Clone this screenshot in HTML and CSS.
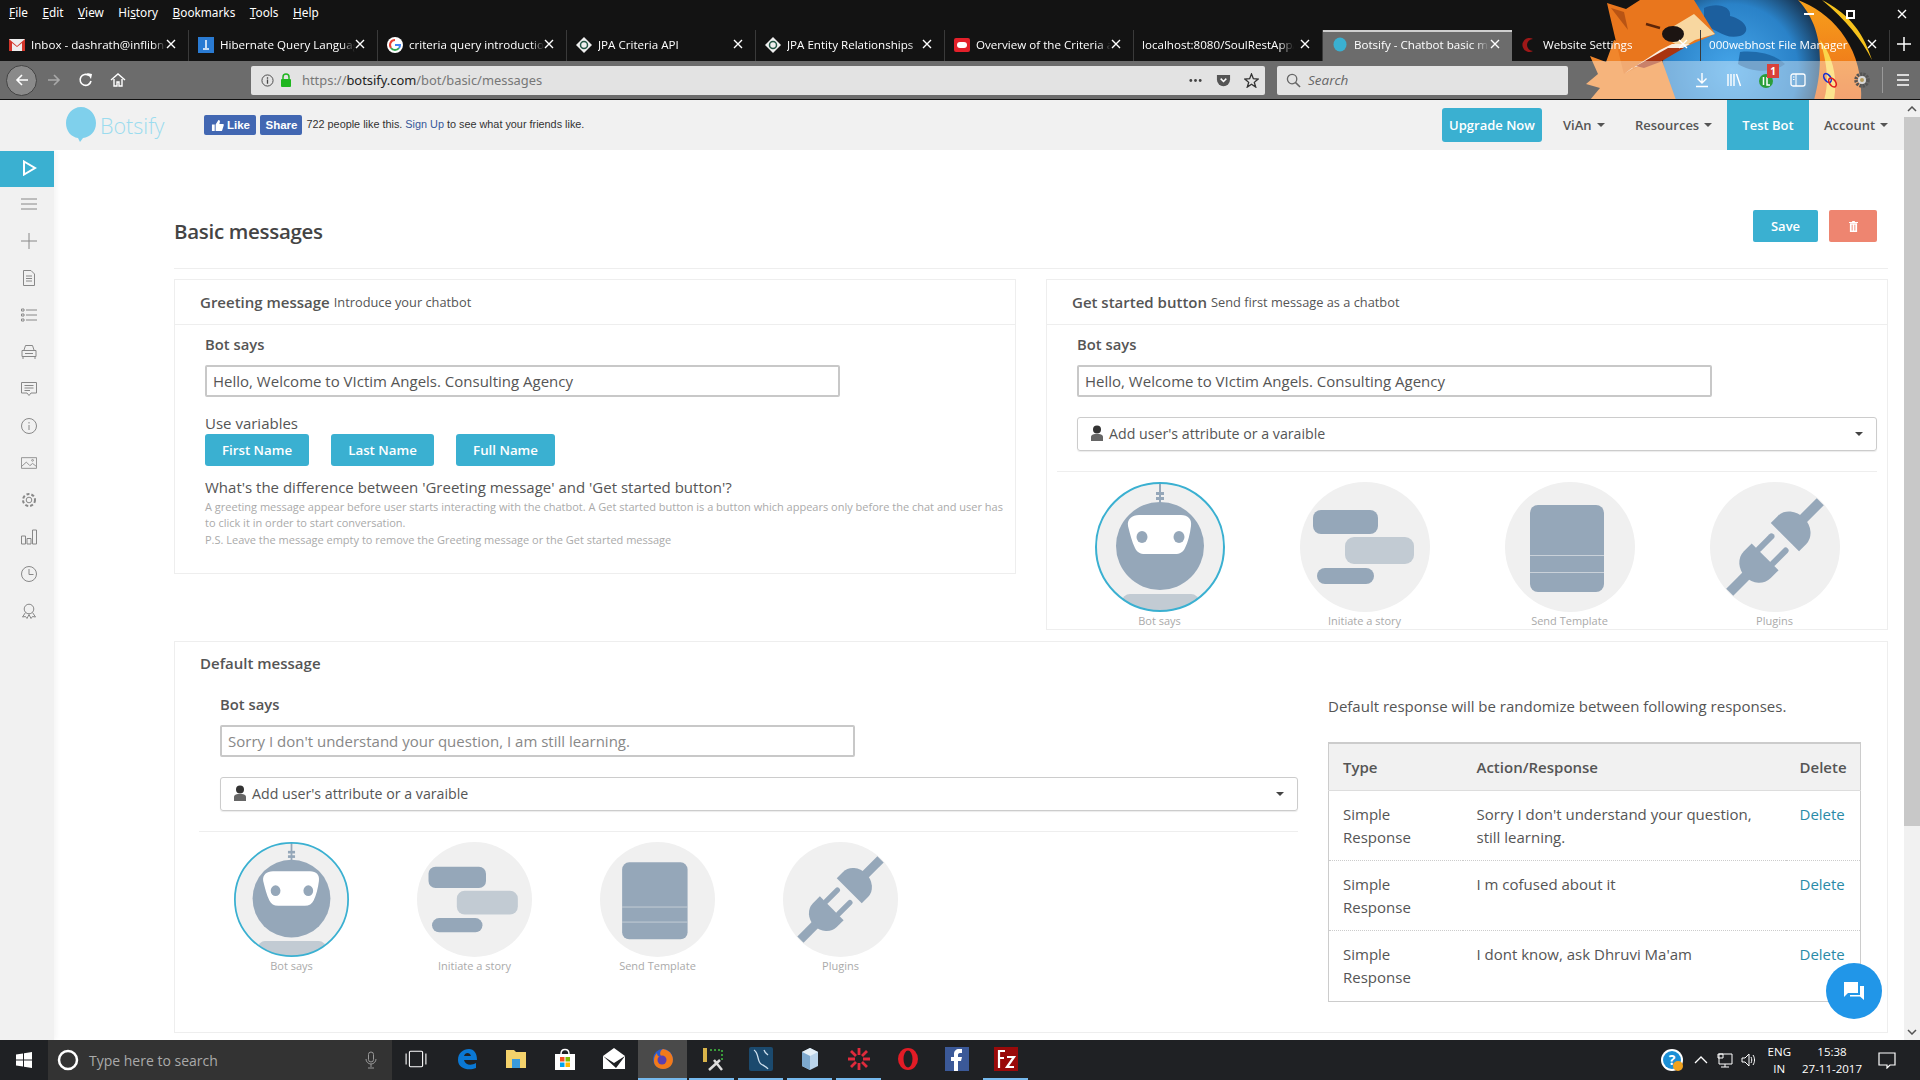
FILE: index.html
```html
<!DOCTYPE html>
<html lang="en">
<head>
<meta charset="utf-8">
<title>Botsify - Chatbot basic messages</title>
<link rel="stylesheet" href="styles.css">
</head>
<body>
<svg class="defs" width="0" height="0" aria-hidden="true">
  <defs>
    <clipPath id="circ"><circle cx="65" cy="65" r="64"/></clipPath>
    <symbol id="i-bot" viewBox="0 0 130 130">
      <circle cx="65" cy="65" r="64" fill="#f0f0f0"/>
      <g clip-path="url(#circ)">
        <rect x="27" y="112" width="77" height="20" rx="8" fill="#c2cbd3"/>
        <rect x="64" y="0" width="2" height="22" fill="#95a7b9"/>
        <rect x="61" y="10" width="8" height="3" fill="#95a7b9"/>
        <rect x="61" y="15" width="8" height="3" fill="#95a7b9"/>
        <circle cx="65" cy="64" r="44" fill="#95a7b9"/>
        <path d="M44 33H86C93 33 97 37 96 44C95 52 93 60 90 66C88 70 85 72 80 72H50C45 72 42 70 40 66C37 60 35 52 33 44C32 37 37 33 44 33Z" fill="#fff"/>
        <ellipse cx="47" cy="55" rx="5.500" ry="6" fill="#95a7b9"/>
        <ellipse cx="84" cy="55" rx="5.500" ry="6" fill="#95a7b9"/>
      </g>
      <circle cx="65" cy="65" r="64" fill="none" stroke="#3ab0d1" stroke-width="2"/>
    </symbol>
    <symbol id="i-story" viewBox="0 0 130 130">
      <circle cx="65" cy="65" r="65" fill="#f0f0f0"/>
      <rect x="13" y="28" width="65" height="24" rx="8" fill="#95a7b9"/>
      <rect x="45" y="55" width="69" height="27" rx="9" fill="#c2cbd3"/>
      <rect x="17" y="86" width="57" height="16" rx="8" fill="#95a7b9"/>
    </symbol>
    <symbol id="i-tpl" viewBox="0 0 130 130">
      <circle cx="65" cy="65" r="65" fill="#f0f0f0"/>
      <rect x="25" y="23" width="74" height="87" rx="8" fill="#95a7b9"/>
      <rect x="25" y="73" width="74" height="1" fill="#c9d1d9"/>
      <rect x="25" y="90" width="74" height="1" fill="#c9d1d9"/>
    </symbol>
    <symbol id="i-plug" viewBox="0 0 130 130">
      <circle cx="65" cy="65" r="65" fill="#f0f0f0"/>
      <g transform="rotate(45 65 65)" fill="#95a7b9">
        <rect x="60" y="1" width="10" height="30"/>
        <path d="M45 51V41A20 17 0 0 1 85 41V51Z"/>
        <rect x="52" y="57" width="6" height="24" rx="3"/>
        <rect x="72" y="57" width="6" height="24" rx="3"/>
        <path d="M46 79H84V90A19 17 0 0 1 46 90Z"/>
        <rect x="60" y="104" width="10" height="25"/>
      </g>
    </symbol>
    <symbol id="i-person" viewBox="0 0 14 16">
      <circle cx="7" cy="4.500" r="4" fill="#333"/>
      <path d="M1 16V12C1 9.500 4 9 7 9S13 9.500 13 12V16Z" fill="#666"/>
    </symbol>
    <symbol id="i-x" viewBox="0 0 10 10"><path d="M1 1L9 9M9 1L1 9" stroke="#fff" stroke-width="1.400" fill="none"/></symbol>
    <symbol id="i-jpa" viewBox="0 0 16 16"><path d="M8 0L16 8L8 16L0 8Z" fill="#eee"/><circle cx="8" cy="8" r="3.500" fill="none" stroke="#254" stroke-width="1.500"/></symbol>
  </defs>
</svg>

<header class="chrome">
  <svg class="theme" viewBox="1560 0 360 100" width="360" height="100" aria-hidden="true">
    <defs>
      <radialGradient id="globe" cx="0.42" cy="0.55" r="0.62"><stop offset="0" stop-color="#46a6ea"/><stop offset="0.65" stop-color="#2a82c8"/><stop offset="1" stop-color="#14283f"/></radialGradient>
      <linearGradient id="flame" x1="0" y1="0" x2="0" y2="1"><stop offset="0" stop-color="#f7a11b"/><stop offset="1" stop-color="#ec6a1a"/></linearGradient>
    </defs>
    <circle cx="1745" cy="62" r="82" fill="url(#globe)"/>
    <path d="M1704 8C1716 2 1732 6 1730 16C1746 20 1752 32 1740 36C1724 40 1716 28 1704 26Z" fill="#1c5f9e"/>
    <path d="M1740 52C1755 50 1775 54 1785 64C1772 74 1750 72 1738 64Z" fill="#1f6bab"/>
    <path d="M1798 0C1830 12 1864 45 1861 100H1814C1822 70 1826 30 1798 0Z" fill="url(#flame)"/>
    <path d="M1822 0C1845 12 1862 28 1872 60C1862 40 1846 20 1822 0Z" fill="#f6c21c"/>
    <path d="M1820 40C1832 55 1838 75 1834 100H1824C1830 80 1826 60 1820 40Z" fill="#fbd44a"/>
    <path d="M1590 100L1600 88L1586 84L1598 74L1590 56L1606 62L1614 40L1660 55L1676 100Z" fill="#f0862c"/>
    <path d="M1607 3L1626 9L1640 0H1694L1715 34L1692 44L1660 56L1624 74C1618 50 1612 25 1607 3Z" fill="#e9761d"/>
    <path d="M1611 8L1624 12L1628 30Z" fill="#b85414"/>
    <path d="M1674 26L1694 14L1715 34L1695 40L1682 48L1672 42Z" fill="#f8d7a0"/>
    <path d="M1624 74L1660 50L1672 44L1690 44L1660 60L1632 68Z" fill="#fbeee0"/>
    <path d="M1636 66L1668 48L1684 48L1660 62L1644 68Z" fill="#a93410"/>
    <ellipse cx="1673" cy="34" rx="11" ry="8" fill="#1c1412"/>
    <path d="M1646 24L1660 28" stroke="#5e2508" stroke-width="2.500"/>
  </svg>
  <nav class="menubar">
    <span class="menu"><u>F</u>ile</span>
    <span class="menu"><u>E</u>dit</span>
    <span class="menu"><u>V</u>iew</span>
    <span class="menu">Hi<u>s</u>tory</span>
    <span class="menu"><u>B</u>ookmarks</span>
    <span class="menu"><u>T</u>ools</span>
    <span class="menu"><u>H</u>elp</span>
    <div class="winctl">
      <span class="min"></span>
      <span class="restore"></span>
      <svg class="wclose"><use href="#i-x"/></svg>
    </div>
  </nav>
  <div class="tabs">
    <div class="tab"><svg class="fav" viewBox="0 0 16 16"><rect y="2" width="16" height="12" fill="#eee"/><path d="M0 2L8 9L16 2V14H13V6L8 10L3 6V14H0Z" fill="#d3352a"/></svg><span class="tl">Inbox - dashrath@inflibnet</span><svg class="tx"><use href="#i-x"/></svg></div>
    <div class="tab"><svg class="fav" viewBox="0 0 16 16"><rect width="16" height="16" fill="#2a7bd3"/><path d="M8 3V11M5 12H11" stroke="#fff" stroke-width="1.500"/></svg><span class="tl">Hibernate Query Language</span><svg class="tx"><use href="#i-x"/></svg></div>
    <div class="tab"><svg class="fav" viewBox="0 0 16 16"><circle cx="8" cy="8" r="8" fill="#fff"/><path d="M8 3A5 5 0 0 0 4 11" stroke="#e94235" stroke-width="2" fill="none"/><path d="M4 11A5 5 0 0 0 12 11" stroke="#34a853" stroke-width="2" fill="none"/><path d="M12 11A5 5 0 0 0 13 8H8" stroke="#4285f4" stroke-width="2" fill="none"/></svg><span class="tl">criteria query introduction</span><svg class="tx"><use href="#i-x"/></svg></div>
    <div class="tab"><svg class="fav"><use href="#i-jpa"/></svg><span class="tl">JPA Criteria API</span><svg class="tx"><use href="#i-x"/></svg></div>
    <div class="tab"><svg class="fav"><use href="#i-jpa"/></svg><span class="tl">JPA Entity Relationships</span><svg class="tx"><use href="#i-x"/></svg></div>
    <div class="tab"><svg class="fav" viewBox="0 0 16 16"><rect y="1" width="16" height="14" rx="2" fill="#e3202a"/><rect x="3" y="5" width="10" height="6" rx="3" fill="#fff"/></svg><span class="tl">Overview of the Criteria and</span><svg class="tx"><use href="#i-x"/></svg></div>
    <div class="tab tab-nofav"><span class="tl">localhost:8080/SoulRestApp/</span><svg class="tx"><use href="#i-x"/></svg></div>
    <div class="tab tab-active"><svg class="fav" viewBox="0 0 16 16"><ellipse cx="8" cy="7.500" rx="6.500" ry="7" fill="#3ab0d1"/></svg><span class="tl">Botsify - Chatbot basic mess</span><svg class="tx"><use href="#i-x"/></svg></div>
    <div class="tab"><svg class="fav" viewBox="0 0 16 16"><path d="M12 2A7 7 0 1 0 12 14A5 5 0 0 1 12 2Z" fill="#a01818"/></svg><span class="tl">Website Settings</span><svg class="tx"><use href="#i-x"/></svg></div>
    <div class="tab tab-nofav"><span class="tl">000webhost File Manager</span><svg class="tx"><use href="#i-x"/></svg></div>
    <svg class="newtab" viewBox="0 0 14 14"><path d="M7 0V14M0 7H14" stroke="#fff" stroke-width="1.500"/></svg>
  </div>
  <div class="toolbar">
    <span class="backbtn"><svg viewBox="0 0 16 16" width="16" height="16"><path d="M14 8H3M8 3L3 8L8 13" stroke="#fff" stroke-width="1.600" fill="none"/></svg></span>
    <svg class="tbi" viewBox="0 0 16 16"><path d="M2 8H13M8 3L13 8L8 13" stroke="#a9a9a9" stroke-width="1.600" fill="none"/></svg>
    <svg class="tbi" viewBox="0 0 16 16"><path d="M13 9A5.500 5.500 0 1 1 11 3.500" stroke="#fff" stroke-width="1.600" fill="none"/><path d="M9 1L14 2L13 7Z" fill="#fff"/></svg>
    <svg class="tbi" viewBox="0 0 16 16"><path d="M1 8L8 2L15 8M4 7V14H7V10H9V14H12V7" stroke="#fff" stroke-width="1.400" fill="none"/></svg>
    <div class="urlbar">
      <svg class="ui" viewBox="0 0 14 14"><circle cx="7" cy="7" r="6" fill="none" stroke="#444"/><path d="M7 6V10.500M7 3.500V5" stroke="#444" stroke-width="1.400"/></svg>
      <svg class="lock" viewBox="0 0 12 14"><path d="M3 6V4A3 3 0 0 1 9 4V6" fill="none" stroke="#1fb61f" stroke-width="1.500"/><rect x="1" y="6" width="10" height="8" rx="1" fill="#1fb61f"/></svg>
      <span class="url">https://<b>botsify.com</b>/bot/basic/messages</span>
      <span class="uright">
        <svg class="ur" viewBox="0 0 16 16"><circle cx="3" cy="8" r="1.500" fill="#444"/><circle cx="8" cy="8" r="1.500" fill="#444"/><circle cx="13" cy="8" r="1.500" fill="#444"/></svg>
        <svg class="ur" viewBox="0 0 16 16"><path d="M1 2H15V7A7 7 0 0 1 1 7Z" fill="#555"/><path d="M5 6L8 9L11 6" stroke="#fff" stroke-width="1.600" fill="none"/></svg>
        <svg class="ur" viewBox="0 0 16 16"><path d="M8 1L10 6L15 6.500L11 10L12.500 15L8 12L3.500 15L5 10L1 6.500L6 6Z" fill="none" stroke="#333" stroke-width="1.400"/></svg>
      </span>
    </div>
    <div class="searchbar">
      <svg class="ui" viewBox="0 0 16 16"><circle cx="6.500" cy="6.500" r="5" fill="none" stroke="#666" stroke-width="1.400"/><path d="M10 10L15 15" stroke="#666" stroke-width="1.600"/></svg>
      <i>Search</i>
    </div>
    <div class="tools">
      <svg class="tbi2" viewBox="0 0 16 16"><path d="M8 1V11M3.500 6.500L8 11L12.500 6.500M2 14.500H14" stroke="#fff" stroke-width="1.400" fill="none"/></svg>
      <svg class="tbi2" viewBox="0 0 16 16"><path d="M2 2V14M5 2V14M8 2V14M10.500 2L14.500 14" stroke="#fff" stroke-width="1.400" fill="none"/></svg>
      <span class="ublock"><svg class="tbi2" viewBox="0 0 16 16"><circle cx="8" cy="9" r="7" fill="#2b9e3a"/><path d="M5.500 5V13M9 5V13H12" stroke="#fff" stroke-width="1.500" fill="none"/></svg><em class="badge">1</em></span>
      <svg class="tbi2" viewBox="0 0 16 16"><rect x="1" y="2" width="14" height="12" rx="2" fill="none" stroke="#fff" stroke-width="1.300"/><path d="M6 2V14M3 5H4.500M3 7.500H4.500" stroke="#fff"/></svg>
      <svg class="tbi2" viewBox="0 0 16 16"><ellipse cx="5.500" cy="6" rx="3" ry="5" transform="rotate(-35 5.500 6)" fill="none" stroke="#1a2fd0" stroke-width="1.600"/><ellipse cx="10.500" cy="10.500" rx="3" ry="5" transform="rotate(-35 10.500 10.500)" fill="none" stroke="#e01c1c" stroke-width="1.600"/></svg>
      <svg class="tbi2" viewBox="0 0 16 16"><circle cx="8" cy="8" r="6" fill="none" stroke="#555" stroke-width="3.500" stroke-dasharray="2.200 1"/><circle cx="8" cy="8" r="4" fill="#d8d8d8"/><circle cx="8" cy="8" r="2" fill="#b59a5a"/></svg>
      <span class="tsep"></span>
      <svg class="tbi2" viewBox="0 0 16 16"><path d="M2 3H14M2 8H14M2 13H14" stroke="#fff" stroke-width="1.700"/></svg>
    </div>
  </div>
</header>

<div class="page">
  <div class="pagebody">
    <nav class="topnav">
      <a class="logo"><svg viewBox="0 0 30 36" width="30" height="36"><path d="M15 0C24 0 30 8 30 16C30 25 24 30 17 31L14 35L12 31C5 30 0 24 0 16C0 8 6 0 15 0Z" fill="#7fd0ec"/></svg><span>Botsify</span></a>
      <div class="fb">
        <span class="fbbtn fblike"><svg viewBox="0 0 14 14" width="13" height="13"><path d="M1 6H4V13H1ZM5 6L8 1C9.500 1 10 2 9.500 3.500L9 5.500H13C14 5.500 14 7 13.500 7.500L12 12.500C11.700 13 11.500 13 11 13H5Z" fill="#fff"/></svg>Like</span>
        <span class="fbbtn">Share</span>
        <span class="fbtxt">722 people like this. <a>Sign Up</a> to see what your friends like.</span>
      </div>
      <div class="navr">
        <span class="upgrade">Upgrade Now</span>
        <span class="navi ni-vian">ViAn<b class="caret"></b></span>
        <span class="navi ni-res">Resources<b class="caret"></b></span>
        <span class="navi ni-test">Test Bot</span>
        <span class="navi ni-acc">Account<b class="caret"></b></span>
      </div>
    </nav>
    <div class="body">
      <aside class="sidebar">
        <span class="si si-active"><svg viewBox="0 0 16 16"><path d="M3 1.500L14 8L3 14.500Z" fill="none" stroke="#fff" stroke-width="2"/></svg></span>
        <span class="si"><svg viewBox="0 0 16 16"><path d="M0 3H16M0 8H16M0 13H16"/></svg></span>
        <span class="si"><svg viewBox="0 0 16 16"><path d="M8 0V16M0 8H16"/></svg></span>
        <span class="si"><svg viewBox="0 0 16 16"><path d="M2.500 .5H10L13.500 4V15.500H2.500ZM5 6H11M5 8.500H11M5 11H11"/></svg></span>
        <span class="si"><svg viewBox="0 0 16 16"><path d="M5 3H16M5 8H16M5 13H16M.5 2H3V4H.5ZM.5 7H3V9H.5ZM.5 12H3V14H.5Z"/></svg></span>
        <span class="si"><svg viewBox="0 0 16 16"><path d="M3 6L4.500 1.500H11.500L13 6M1 6.500H15V12.500H1ZM2 12.500V15M14 12.500V15M4 9.500H12"/></svg></span>
        <span class="si"><svg viewBox="0 0 16 16"><path d="M.5 1.500H15.500V12H10L8 14.500L6 12H.5ZM3.500 4.500H12.500M3.500 7H12.500M3.500 9.500H9"/></svg></span>
        <span class="si"><svg viewBox="0 0 16 16"><circle cx="8" cy="8" r="7.500"/><path d="M8 7V12M8 4V5.500"/></svg></span>
        <span class="si"><svg viewBox="0 0 18 16"><path d="M.5 2H17.500V14H.5ZM.5 12L6 7L10 11L13 8.500L17.500 12"/><circle cx="13" cy="5" r="1"/></svg></span>
        <span class="si"><svg viewBox="0 0 16 16"><circle cx="8" cy="8" r="2.800"/><circle cx="8" cy="8" r="6" stroke-width="2" stroke-dasharray="3 2"/></svg></span>
        <span class="si"><svg viewBox="0 0 16 16"><path d="M.5 7H4.500V15H.5ZM6 9.500H10V15H6ZM11.500 1H15.500V15H11.500Z"/></svg></span>
        <span class="si"><svg viewBox="0 0 16 16"><circle cx="8" cy="8" r="7.500"/><path d="M8 3V8.500H12.500"/></svg></span>
        <span class="si"><svg viewBox="0 0 16 16"><circle cx="8" cy="6" r="4.800"/><path d="M4.500 9.500L1.500 14L4.500 13.500L6 15.500L8 11.500L10 15.500L11.500 13.500L14.500 14L11.500 9.500"/></svg></span>
      </aside>
      <main class="content">
        <div class="titlerow">
          <h1>Basic messages</h1>
          <div class="actions">
            <span class="btn btn-save">Save</span>
            <span class="btn btn-del"><svg viewBox="0 0 10 12" width="9" height="11"><path d="M1 2.500H9V12H1ZM0 1H10V2H0ZM3.500 0H6.500V1H3.500Z" fill="#fff"/><path d="M3.500 4V10.500M6.500 4V10.500" stroke="#ee8570"/></svg></span>
          </div>
        </div>
        <div class="cols">
          <section class="panel">
            <div class="phead"><b>Greeting message</b> <span>Introduce your chatbot</span></div>
            <div class="gbody">
              <label class="says">Bot says</label>
              <div class="inp">Hello, Welcome to VIctim Angels. Consulting Agency</div>
              <div class="usevars">Use variables</div>
              <div class="varbtns">
                <span class="vb vb1">First Name</span>
                <span class="vb vb2">Last Name</span>
                <span class="vb vb3">Full Name</span>
              </div>
              <div class="qh">What's the difference between 'Greeting message' and 'Get started button'?</div>
              <p class="help">A greeting message appear before user starts interacting with the chatbot. A Get started button is a button which appears only before the chat and user has to click it in order to start conversation.<br>P.S. Leave the message empty to remove the Greeting message or the Get started message</p>
            </div>
          </section>
          <section class="panel">
            <div class="phead"><b>Get started button</b> <span>Send first message as a chatbot</span></div>
            <div class="sbody">
              <div class="indent">
                <label class="says">Bot says</label>
                <div class="inp">Hello, Welcome to VIctim Angels. Consulting Agency</div>
                <div class="sel"><svg class="pers"><use href="#i-person"/></svg>Add user's attribute or a varaible<b class="caret sel-caret"></b></div>
              </div>
              <hr class="rule">
              <div class="acts">
                <div class="act"><svg class="aci"><use href="#i-bot"/></svg><span>Bot says</span></div>
                <div class="act"><svg class="aci"><use href="#i-story"/></svg><span>Initiate a story</span></div>
                <div class="act"><svg class="aci"><use href="#i-tpl"/></svg><span>Send Template</span></div>
                <div class="act"><svg class="aci"><use href="#i-plug"/></svg><span>Plugins</span></div>
              </div>
            </div>
          </section>
        </div>
        <section class="panel panel-def">
          <div class="dhead"><b>Default message</b></div>
          <div class="dcols">
            <div class="dleft">
              <div class="dindent">
                <label class="says">Bot says</label>
                <div class="inp inp-ph">Sorry I don't understand your question, I am still learning.</div>
                <div class="sel"><svg class="pers"><use href="#i-person"/></svg>Add user's attribute or a varaible<b class="caret sel-caret"></b></div>
              </div>
              <hr class="rule">
              <div class="acts acts-sm">
                <div class="act"><svg class="aci"><use href="#i-bot"/></svg><span>Bot says</span></div>
                <div class="act"><svg class="aci"><use href="#i-story"/></svg><span>Initiate a story</span></div>
                <div class="act"><svg class="aci"><use href="#i-tpl"/></svg><span>Send Template</span></div>
                <div class="act"><svg class="aci"><use href="#i-plug"/></svg><span>Plugins</span></div>
              </div>
            </div>
            <div class="dright">
              <p class="dnote">Default response will be randomize between following responses.</p>
              <table class="resp">
                <thead><tr><th class="c1">Type</th><th class="c2">Action/Response</th><th class="c3">Delete</th></tr></thead>
                <tbody>
                  <tr><td>Simple Response</td><td>Sorry I don't understand your question, still learning.</td><td><a>Delete</a></td></tr>
                  <tr><td>Simple Response</td><td>I m cofused about it</td><td><a>Delete</a></td></tr>
                  <tr><td>Simple Response</td><td>I dont know, ask Dhruvi Ma'am</td><td><a>Delete</a></td></tr>
                </tbody>
              </table>
            </div>
          </div>
        </section>
      </main>
    </div>
    <span class="chat"><svg viewBox="0 0 24 24" width="24" height="24"><path d="M2 3H16V14H6L2 18Z" fill="#fff"/><path d="M18 7H22V21L18 17.500H8V16H18Z" fill="#fff"/></svg></span>
  </div>
  <div class="scrollbar">
    <svg class="sarrow" viewBox="0 0 10 6"><path d="M1 5L5 1L9 5" fill="none" stroke="#555" stroke-width="1.500"/></svg>
    <div class="thumb"></div>
    <svg class="sarrow" viewBox="0 0 10 6"><path d="M1 1L5 5L9 1" fill="none" stroke="#555" stroke-width="1.500"/></svg>
  </div>
</div>

<footer class="taskbar">
  <span class="start"><svg viewBox="0 0 16 16" width="16" height="16"><path d="M0 2.500L7 1.500V7.500H0ZM8 1.300L16 0V7.500H8ZM0 8.500H7V14.500L0 13.500ZM8 8.500H16V16L8 14.700Z" fill="#fff"/></svg></span>
  <div class="tsearch">
    <svg viewBox="0 0 22 22" width="22" height="22"><circle cx="11" cy="11" r="9" fill="none" stroke="#fff" stroke-width="2.500"/></svg>
    <span>Type here to search</span>
    <svg class="mic" viewBox="0 0 12 18" width="12" height="18"><rect x="3.500" y="1" width="5" height="10" rx="2.500" fill="none" stroke="#999"/><path d="M1 8A5 5 0 0 0 11 8M6 13V16M3 17H9" fill="none" stroke="#999"/></svg>
  </div>
  <div class="tapps">
    <span class="tapp"><svg class="tv" viewBox="0 0 20 20"><rect x="4" y="3" width="12" height="14" rx="1" fill="none" stroke="#fff"/><path d="M1 5V15M19 5V15" stroke="#fff"/></svg></span>
    <span class="tapp"><svg viewBox="0 0 24 24"><path d="M3 13C3 6 8 2 14 2C19 2 22 6 22 13H9C10 18 16 19 21 16V21C14 24 3 22 3 13ZM9 9H16C15 5 10 5 9 9Z" fill="#0a78d4"/></svg></span>
    <span class="tapp"><svg viewBox="0 0 24 24"><path d="M2 3H10L12 5H22V21H2Z" fill="#f4d26b"/><rect x="8" y="12" width="8" height="9" fill="#3a9bdc"/></svg></span>
    <span class="tapp"><svg viewBox="0 0 24 24"><path d="M2 7H22V23H2Z" fill="#fff"/><path d="M8 7C8 1 16 1 16 7" fill="none" stroke="#fff" stroke-width="1.500"/><rect x="7" y="10" width="4.500" height="4.500" fill="#f25022"/><rect x="12.500" y="10" width="4.500" height="4.500" fill="#7fba00"/><rect x="7" y="15.500" width="4.500" height="4.500" fill="#00a4ef"/><rect x="12.500" y="15.500" width="4.500" height="4.500" fill="#ffb900"/></svg></span>
    <span class="tapp"><svg viewBox="0 0 24 24"><path d="M1 9L12 1L23 9V22H1Z" fill="#fff"/><path d="M1 9L12 16L23 9L14 21Z" fill="#1f2124"/></svg></span>
    <span class="tapp tapp-active"><svg viewBox="0 0 24 24"><circle cx="12" cy="12" r="10" fill="#2a5bd0"/><path d="M12 2C20 3 24 11 21 17C18 23 8 24 4 18C2 14 3 9 6 6C6 9 8 10 10 9C8 6 10 3 12 2Z" fill="#f27a1a"/><circle cx="11" cy="13" r="4.500" fill="#5a3fb0"/></svg></span>
    <span class="tapp run"><svg viewBox="0 0 24 24"><rect x="3" y="1" width="4" height="14" fill="#d9b44a"/><path d="M10 3H22V14" fill="none" stroke="#3a9a3a" stroke-dasharray="2 2" stroke-width="2"/><path d="M9 23L20 13M14 13L22 23" stroke="#ddd" stroke-width="2.500"/></svg></span>
    <span class="tapp run"><svg viewBox="0 0 24 24"><rect width="24" height="24" rx="2" fill="#1b4a6e"/><path d="M5 3C10 6 8 14 12 17C15 19 18 20 19 22M15 3C16 6 18 7 19 8" fill="none" stroke="#cfe0ee" stroke-width="1.300"/></svg></span>
    <span class="tapp run"><svg viewBox="0 0 24 24"><path d="M12 1L20 5V19L12 23L4 19V5Z" fill="#b9d3ea"/><path d="M4 5L12 9L20 5L12 1Z" fill="#e5f0f8"/><path d="M12 9V23L4 19V5Z" fill="#7da9cf"/></svg></span>
    <span class="tapp run"><svg viewBox="0 0 24 24"><g stroke="#e12a3c" stroke-width="2.800"><path d="M12 1V8M12 16V23M1 12H8M16 12H23M4 4L9 9M15 15L20 20M20 4L15 9M9 15L4 20"/></g></svg></span>
    <span class="tapp"><svg viewBox="0 0 24 24"><ellipse cx="12" cy="12" rx="10" ry="11" fill="#e21c26"/><ellipse cx="12" cy="12" rx="4.500" ry="8.500" fill="#1f2124"/></svg></span>
    <span class="tapp"><svg viewBox="0 0 24 24"><rect width="24" height="24" fill="#3b5998"/><path d="M13 24V14H16L17 10H13V8C13 7 13.500 6 15 6H17V2H14C11 2 9 4 9 7V10H6V14H9V24Z" fill="#fff"/></svg></span>
    <span class="tapp run"><svg viewBox="0 0 24 24"><rect width="24" height="24" fill="#9a0a0a"/><path d="M5 21V4H11M5 11H10M13 10H20L13 20H20" fill="none" stroke="#fff" stroke-width="2.200"/></svg></span>
  </div>
  <div class="tray">
    <svg class="t-help" viewBox="0 0 24 24"><circle cx="12" cy="12" r="11" fill="#fff"/><circle cx="12" cy="12" r="9" fill="#1b8fd6"/><text x="12" y="17" text-anchor="middle" class="qm">?</text><circle cx="18" cy="18" r="5" fill="#f0a21e"/></svg>
    <svg class="t-ic" viewBox="0 0 16 16"><path d="M2 11L8 5L14 11" fill="none" stroke="#fff" stroke-width="1.300"/></svg>
    <svg class="t-ic" viewBox="0 0 16 16"><path d="M2 2H15V12H2ZM8 12V15M4 15H12M1 2H6V6H1Z" fill="none" stroke="#fff"/></svg>
    <svg class="t-ic" viewBox="0 0 16 16"><path d="M1 6H4L8 2V14L4 10H1ZM10 5C11 7 11 9 10 11M12 3C14 6 14 10 12 13" fill="none" stroke="#fff"/></svg>
    <div class="lang"><span>ENG</span><span>IN</span></div>
    <div class="clock"><span>15:38</span><span>27-11-2017</span></div>
    <svg class="t-note" viewBox="0 0 18 18"><path d="M1 2H17V14H12L9 17V14H1Z" fill="none" stroke="#fff" stroke-width="1.200"/></svg>
  </div>
</footer>
</body>
</html>
```
FILE: styles.css
```css
* { box-sizing: border-box; }
html, body { margin: 0; padding: 0; height: 1080px; overflow: hidden; }
body { width: 1920px; font-family: "Open Sans", sans-serif; color: #555; background: #fff; display: flex; flex-direction: column; }
.defs { position: absolute; }

/* browser chrome */
.chrome { position: relative; height: 100px; background: #131313; color: #fff; flex: none; overflow: hidden; border-bottom: 1px solid #111; }
.theme { position: absolute; right: 0; top: 0; }
.menubar { position: relative; height: 30px; display: flex; align-items: flex-start; padding: 4px 0 0 9px; gap: 14.500px; font-size: 11.800px; line-height: 16px; font-family: "Noto Sans", sans-serif; }
.winctl { position: absolute; right: 0; top: 0; width: 130px; height: 30px; }
.min { position: absolute; left: 14px; top: 13px; width: 10px; height: 2px; background: #fff; }
.restore { position: absolute; left: 56px; top: 10px; width: 9px; height: 9px; border: 2px solid #fff; }
.wclose { position: absolute; left: 107px; top: 9px; width: 10px; height: 10px; }
.tabs { position: relative; height: 31px; display: flex; }
.tab { position: relative; width: 189px; height: 31px; display: flex; align-items: center; padding: 0 0 2px 9px; font-size: 11.600px; border-right: 1px solid #3a3a3a; }
.tab-nofav { padding-left: 8px; }
.tab-active { background: rgba(255,255,255,.38); border-top: 2px solid #cfcfcf; border-right: 0; padding-bottom: 4px; }
.tab-active .tx { top: 7px; }
.fav { width: 16px; height: 16px; flex: none; margin-right: 6px; }
.tl { width: 135px; overflow: hidden; white-space: nowrap; -webkit-mask-image: linear-gradient(90deg, #000 90%, transparent); mask-image: linear-gradient(90deg, #000 90%, transparent); }
.tab-nofav .tl { width: 152px; }
.tx { position: absolute; right: 12px; top: 9px; width: 10px; height: 10px; }
.newtab { width: 14px; height: 14px; margin: 7px 0 0 7px; }
.toolbar { position: relative; height: 38px; background: rgba(255,255,255,.38); display: flex; align-items: center; padding-left: 6px; }
.backbtn { width: 31px; height: 31px; border-radius: 50%; border: 1px solid #444; background: #8a8a8a; display: flex; align-items: center; justify-content: center; flex: none; }
.tbi { width: 16px; height: 16px; margin-left: 16px; flex: none; }
.tbi:first-of-type { margin-left: 9px; }
.urlbar { width: 1014px; height: 29px; margin-left: 125px; background: #e3e3e3; border-radius: 2px; display: flex; align-items: center; padding-left: 10px; color: #777; font-size: 13px; flex: none; }
.ui { width: 13px; height: 13px; flex: none; }
.lock { width: 12px; height: 14px; margin-left: 6px; flex: none; }
.url { margin-left: 10px; white-space: nowrap; font-family: "Noto Sans", sans-serif; font-size: 12.900px; }
.url b { font-weight: 400; color: #222; }
.uright { margin-left: auto; display: flex; gap: 13px; padding-right: 6px; }
.ur { width: 15px; height: 15px; }
.searchbar { width: 291px; height: 29px; margin-left: 12px; background: #e3e3e3; border-radius: 2px; display: flex; align-items: center; gap: 7px; padding-left: 9px; color: #666; font-size: 13.500px; flex: none; }
.searchbar .ui { width: 15px; height: 15px; }
.tools { position: relative; display: flex; align-items: center; gap: 16px; margin-left: 126px; }
.tbi2 { width: 16px; height: 16px; display: block; flex: none; }
.ublock { position: relative; display: block; }
.badge { position: absolute; left: 9px; top: -8px; width: 12px; height: 14px; background: #d9413a; color: #fff; font: 700 10px/14px "Open Sans", sans-serif; text-align: center; }
.tsep { width: 1px; height: 26px; background: #999; margin: 0 -4px 0 -4px; }

/* page */
.page { flex: none; height: 940px; display: flex; }
.pagebody { position: relative; width: 1904px; height: 940px; display: flex; flex-direction: column; overflow: hidden; }
.scrollbar { width: 16px; background: #f1f1f1; display: flex; flex-direction: column; align-items: center; padding-top: 6px; }
.sarrow { width: 10px; height: 6px; flex: none; }
.thumb { width: 16px; height: 709px; background: #c8c8c8; margin: 5px 0 203px; }
.topnav { height: 50px; background: #f1f1f1; display: flex; align-items: center; flex: none; position: relative; }
.logo { display: flex; align-items: center; margin-left: 66px; gap: 4px; color: #9bdcef; font-size: 21.500px; font-weight: 300; }
.fb { display: flex; align-items: center; margin-left: 40px; font-family: "Liberation Sans", sans-serif; font-size: 10.850px; color: #333; }
.fbbtn { height: 20px; background: #4267b2; color: #fff; font-weight: 700; font-size: 11.500px; border-radius: 2px; display: flex; align-items: center; justify-content: center; gap: 3px; width: 42px; margin-right: 4px; }
.fblike { width: 52px; }
.fbtxt { padding-bottom: 2px; }
.fbtxt a { color: #365899; }
.navr { margin-left: auto; display: flex; align-items: center; height: 50px; font-size: 13px; font-weight: 600; color: #555; }
.upgrade { width: 100px; height: 34px; background: #3ab0d1; color: #fff; border-radius: 3px; display: flex; align-items: center; justify-content: center; margin-right: 21px; }
.navi { display: flex; align-items: center; height: 50px; white-space: nowrap; }
.ni-vian { width: 72px; }
.ni-res { width: 92px; }
.ni-test { width: 82px; background: #3ab0d1; color: #fff; justify-content: center; margin-right: 15px; }
.ni-acc { width: 80px; }
.caret { display: inline-block; width: 0; height: 0; margin-left: 5px; border-top: 4px solid #555; border-left: 4px solid transparent; border-right: 4px solid transparent; }
.body { flex: 1; display: flex; min-height: 0; }
.sidebar { width: 54px; flex: none; background: #f1f1f1; box-shadow: 2px 0 6px rgba(0,0,0,.05); padding-top: 1px; display: flex; flex-direction: column; }
.si { width: 54px; height: 37px; flex: none; display: flex; align-items: center; justify-content: center; padding: 0 0 3px 3px; }
.si svg { width: 16px; height: 16px; fill: none; stroke: #888; stroke-width: 1; }
.si-active { background: #3ab0d1; height: 36px; padding: 0 0 3px 4px; }
.si-active svg { stroke: none; }
.content { flex: 1; padding: 0 16px 0 120px; min-width: 0; }
.titlerow { height: 119px; display: flex; justify-content: space-between; align-items: flex-start; padding-top: 60px; border-bottom: 1px solid #eee; margin-bottom: 10px; }
h1 { margin: -1px 0 0; font-size: 20.500px; line-height: 44px; font-weight: 600; color: #444; letter-spacing: -.3px; }
.actions { display: flex; gap: 11px; padding-right: 11px; }
.btn { height: 32px; border-radius: 2px; display: flex; align-items: center; justify-content: center; color: #fff; font-size: 13px; font-weight: 600; }
.btn-save { width: 65px; background: #3ab0d1; }
.btn-del { width: 48px; background: #ee8570; }
.cols { display: grid; grid-template-columns: 842px 842px; gap: 30px; align-items: start; }
.panel { border: 1px solid #eee; background: #fff; }
.phead { height: 45px; border-bottom: 1px solid #eee; padding-left: 25px; display: flex; align-items: center; gap: 4px; font-size: 12.800px; }
.phead b, .dhead b { font-size: 15px; font-weight: 600; color: #555; }
.gbody { padding: 6px 10px 0 30px; height: 248px; }
.says { display: block; font-size: 14.800px; font-weight: 600; line-height: 20px; margin: 3px 0 11px; color: #555; }
.inp { width: 635px; height: 32px; border: 2px solid #c8c8c8; border-radius: 2px; padding-left: 6px; font-size: 15px; line-height: 28px; color: #555; white-space: nowrap; }
.inp-ph { color: #888; }
.usevars { font-size: 15px; line-height: 20px; margin-top: 16px; }
.varbtns { display: flex; gap: 22px; margin-top: 1px; }
.vb { height: 32px; background: #3ab0d1; color: #fff; font-size: 13.300px; font-weight: 600; border-radius: 3px; display: flex; align-items: center; justify-content: center; }
.vb1 { width: 104px; }
.vb2 { width: 103px; }
.vb3 { width: 99px; }
.qh { font-size: 15px; line-height: 20px; margin-top: 11px; white-space: nowrap; }
.help { margin: 2px 0 0; font-size: 11px; line-height: 16.300px; color: #aaa; }
.sbody { padding: 6px 10px 0; height: 304px; }
.indent { padding-left: 20px; }
.sel { position: relative; height: 34px; margin-top: 20px; border: 1px solid #ccc; border-radius: 3px; padding: 0 0 2px 12px; display: flex; align-items: center; font-size: 14.200px; color: #555; box-shadow: 0 1px 1px rgba(0,0,0,.08); }
.pers { width: 14px; height: 16px; margin-right: 5px; flex: none; }
.sel-caret { position: absolute; right: 13px; top: 14px; margin: 0; border-top-color: #444; }
.rule { border: 0; border-top: 1px solid #eee; margin: 20px 0 0; }
.acts { display: flex; padding-top: 10px; }
.act { flex: 0 0 205px; display: flex; flex-direction: column; align-items: center; font-size: 11px; color: #aaa; line-height: 16px; }
.aci { width: 130px; height: 130px; }
.act span { margin-top: 1px; }
.panel-def { margin-top: 11px; height: 392px; }
.dhead { height: 43px; padding: 0 0 2px 25px; display: flex; align-items: center; }
.dcols { display: flex; }
.dleft { width: 1099px; margin-left: 24px; flex: none; }
.dindent { padding-left: 21px; }
.dindent .says { margin: 9px 0 11px; }
.dleft .sel { margin-top: 20px; }
.acts-sm { padding: 10px 0 0 1px; }
.acts-sm .act { flex: 0 0 183px; }
.acts-sm .aci { width: 115px; height: 115px; }
.dright { width: 533px; margin-left: 30px; flex: none; }
.dnote { margin: 11px 0 0; font-size: 15px; line-height: 20px; }
.resp { width: 533px; margin-top: 26px; border-collapse: collapse; border: 1px solid #ccc; font-size: 15px; line-height: 23px; table-layout: fixed; border-top-width: 2px; }
.resp th { height: 47px; text-align: left; background: #f1f1f1; font-weight: 600; padding: 2px 14px 0; border-bottom: 1px solid #ddd; color: #555; }
.resp td { padding: 12px 14px 11px; vertical-align: top; border-bottom: 1px dotted #ccc; }
.resp tbody tr:last-child td { border-bottom: 1px solid #ccc; padding-bottom: 12px; }
.c1 { width: 134px; }
.c3 { width: 75px; }
.resp a { color: #2a8ba8; }
.chat { position: absolute; left: 1826px; top: 863px; width: 56px; height: 56px; border-radius: 50%; background: #2196e8; display: flex; align-items: center; justify-content: center; }

/* taskbar */
.taskbar { flex: none; height: 40px; background: #1f2124; display: flex; color: #fff; }
.start { width: 48px; display: flex; align-items: center; justify-content: center; }
.tsearch { width: 344px; background: #333; display: flex; align-items: center; padding-left: 9px; gap: 10px; font-size: 14px; color: #aaa; position: relative; }
.mic { position: absolute; right: 15px; top: 11px; }
.tapps { display: flex; margin-left: 1px; }
.tapp { width: 49px; height: 40px; display: flex; align-items: center; justify-content: center; border-bottom: 2px solid transparent; }
.tapp svg { width: 24px; height: 24px; }
.tapp .tv { width: 22px; height: 22px; margin-right: 3px; }
.tapp-active { background: #4a4a4a; border-bottom-color: #76b9ed; }
.run { border-image: linear-gradient(90deg, transparent 3px, #76b9ed 3px, #76b9ed 46px, transparent 46px) 1; }
.tray { margin-left: auto; display: flex; align-items: center; }
.t-help { width: 24px; height: 24px; margin-right: 9px; }
.qm { font: 700 14px "Open Sans", sans-serif; fill: #fff; }
.t-ic { width: 16px; height: 16px; margin-right: 8px; }
.lang, .clock { display: flex; flex-direction: column; align-items: center; font-size: 11.500px; line-height: 17px; }
.lang { margin: 0 11px 0 3px; }
.clock { width: 60px; }
.t-note { width: 18px; height: 18px; margin: 0 24px 0 16px; }
```
